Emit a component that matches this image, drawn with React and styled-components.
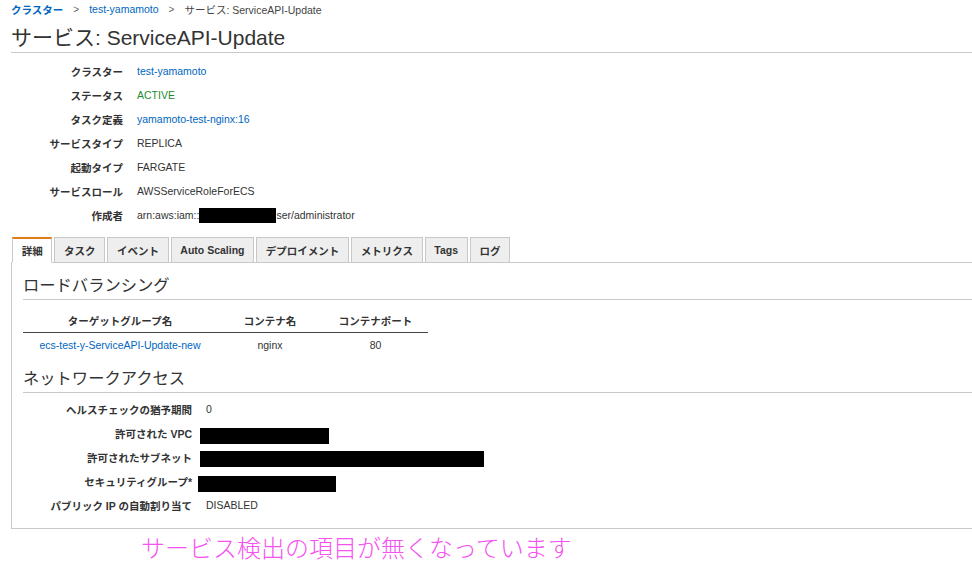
import React from "react";
import styled, { createGlobalStyle } from "styled-components";

const Global = createGlobalStyle`
  html, body { margin: 0; padding: 0; background: #fff; }
  body {
    font-family: "Liberation Sans", "Noto Sans CJK JP", sans-serif;
    color: #333;
    font-size: 10.5px;
  }
`;

const Page = styled.div`
  padding: 0 0 0 11px;
  width: 961px;
`;

const Breadcrumb = styled.nav`
  display: flex;
  align-items: center;
  height: 18px;
  font-size: 10.5px;
`;

const Crumb = styled.a`
  color: ${(p) => (p.$link ? "#0066c0" : "#444")};
  font-weight: ${(p) => (p.$bold ? 700 : 400)};
  text-decoration: none;
`;

const Sep = styled.span`
  color: #666;
  margin: 0 10px;
  font-size: 10px;
`;

const Title = styled.h1`
  margin: 6px 0 0;
  font-size: 21px;
  font-weight: 400;
  line-height: 28px;
  color: #333;
  border-bottom: 1px solid #c8c8c8;
`;

const DetailGrid = styled.dl`
  display: grid;
  grid-template-columns: ${(p) => p.$labelWidth}px auto;
  column-gap: 14px;
  grid-auto-rows: 24px;
  align-items: center;
  margin: ${(p) => p.$margin};
`;

const Label = styled.dt`
  text-align: right;
  font-weight: 700;
  color: #333;
  white-space: nowrap;
`;

const Value = styled.dd`
  margin: 0;
  color: ${(p) => p.$color || "#333"};
  white-space: nowrap;
  display: flex;
  align-items: center;
`;

const Redacted = styled.span`
  display: inline-block;
  width: ${(p) => p.$w}px;
  height: ${(p) => p.$h || 16}px;
  background: #000;
  margin-left: ${(p) => p.$ml || 0}px;
  margin-top: ${(p) => p.$mt || 0}px;
`;

const Tabs = styled.div`
  display: flex;
  gap: 2px;
  margin-top: 10px;
  padding-left: 1px;
  position: relative;
  z-index: 1;
  margin-bottom: -1px;
`;

const Tab = styled.div`
  box-sizing: border-box;
  height: 26px;
  padding: 0 8.7px;
  display: flex;
  align-items: center;
  font-weight: 700;
  font-size: 10.5px;
  color: #333;
  background: ${(p) => (p.$active ? "#fff" : "#eee")};
  border: 1px solid #c8c8c8;
  border-top: ${(p) => (p.$active ? "2px solid #e07b1a" : "1px solid #c8c8c8")};
  border-bottom: ${(p) => (p.$active ? "1px solid #fff" : "1px solid #c8c8c8")};
`;

const Panel = styled.section`
  border: 1px solid #c8c8c8;
  border-right: none;
  padding: 11px 0 11px 11px;
`;

const SectionTitle = styled.h2`
  margin: 0;
  font-size: 16.3px;
  font-weight: 400;
  line-height: 22px;
  color: #333;
  padding-bottom: 3px;
  border-bottom: 1px solid #c8c8c8;
`;

const Table = styled.table`
  border-collapse: collapse;
  margin-top: 9px;
  margin-bottom: 10px;
`;

const Th = styled.th`
  width: ${(p) => p.$w}px;
  height: 23px;
  font-weight: 700;
  text-align: center;
  border-bottom: 1px solid #444;
  padding: 0;
  vertical-align: middle;
`;

const Td = styled.td`
  height: 24px;
  text-align: center;
  padding: 0;
  color: ${(p) => p.$color || "#333"};
`;

const Note = styled.p`
  margin: 5px 0 0 130px;
  font-size: 24px;
  color: #f552f0;
  font-weight: 300;
  line-height: 30px;
`;

const tabs = ["詳細", "タスク", "イベント", "Auto Scaling", "デプロイメント", "メトリクス", "Tags", "ログ"];

export default function App() {
  return (
    <>
      <Global />
      <Page>
        <Breadcrumb>
          <Crumb $link $bold>クラスター</Crumb>
          <Sep>&gt;</Sep>
          <Crumb $link>test-yamamoto</Crumb>
          <Sep>&gt;</Sep>
          <Crumb>サービス: ServiceAPI-Update</Crumb>
        </Breadcrumb>
        <Title>サービス: ServiceAPI-Update</Title>

        <DetailGrid $labelWidth={112} $margin="6px 0 0">
          <Label>クラスター</Label>
          <Value $color="#0066c0">test-yamamoto</Value>
          <Label>ステータス</Label>
          <Value $color="#1d8a2a">ACTIVE</Value>
          <Label>タスク定義</Label>
          <Value $color="#0066c0">yamamoto-test-nginx:16</Value>
          <Label>サービスタイプ</Label>
          <Value>REPLICA</Value>
          <Label>起動タイプ</Label>
          <Value>FARGATE</Value>
          <Label>サービスロール</Label>
          <Value>AWSServiceRoleForECS</Value>
          <Label>作成者</Label>
          <Value>
            arn:aws:iam::
            <Redacted $w={77} $h={15} $mt={1} />
            ser/administrator
          </Value>
        </DetailGrid>

        <Tabs>
          {tabs.map((t, i) => (
            <Tab key={t} $active={i === 0}>{t}</Tab>
          ))}
        </Tabs>
        <Panel>
          <SectionTitle>ロードバランシング</SectionTitle>
          <Table>
            <thead>
              <tr>
                <Th $w={194}>ターゲットグループ名</Th>
                <Th $w={106}>コンテナ名</Th>
                <Th $w={105}>コンテナポート</Th>
              </tr>
            </thead>
            <tbody>
              <tr>
                <Td $color="#0066c0">ecs-test-y-ServiceAPI-Update-new</Td>
                <Td>nginx</Td>
                <Td>80</Td>
              </tr>
            </tbody>
          </Table>
          <SectionTitle>ネットワークアクセス</SectionTitle>
          <DetailGrid $labelWidth={169} $margin="4px 0 0">
            <Label>ヘルスチェックの猶予期間</Label>
            <Value>0</Value>
            <Label>許可された VPC</Label>
            <Value><Redacted $w={129} $ml={-6} $mt={6} /></Value>
            <Label>許可されたサブネット</Label>
            <Value><Redacted $w={284} $ml={-6} $mt={4} /></Value>
            <Label>セキュリティグループ*</Label>
            <Value><Redacted $w={138} $ml={-8} $mt={6} /></Value>
            <Label>パブリック IP の自動割り当て</Label>
            <Value>DISABLED</Value>
          </DetailGrid>
        </Panel>
        <Note>サービス検出の項目が無くなっています</Note>
      </Page>
    </>
  );
}
